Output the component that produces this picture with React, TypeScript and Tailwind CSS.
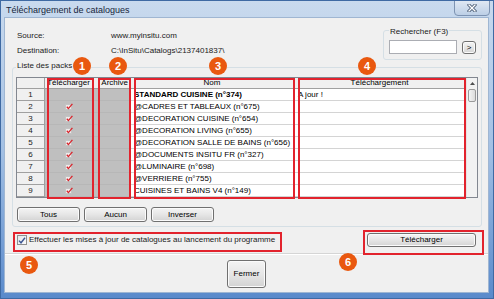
import React from "react";

const rows = [
  { name: "STANDARD CUISINE (n°374)", bold: true, status: "A jour !", check: false },
  { name: "@CADRES ET TABLEAUX (n°675)", check: true },
  { name: "@DECORATION CUISINE (n°654)", check: true },
  { name: "@DECORATION LIVING (n°655)", check: true },
  { name: "@DECORATION SALLE DE BAINS (n°656)", check: true },
  { name: "@DOCUMENTS INSITU FR (n°327)", check: true },
  { name: "@LUMINAIRE (n°698)", check: true },
  { name: "@VERRIERE (n°755)", check: true },
  { name: "CUISINES ET BAINS V4 (n°149)", check: true },
];

function RedCheck() {
  return (
    <svg width="8" height="7" viewBox="0 0 8 7">
      <rect x="0.5" y="1.5" width="6" height="5" fill="#ececec" stroke="#c4c4c4" />
      <path d="M1.8 3.8 L3.4 5.6 L7.4 0.8" stroke="#d8222a" strokeWidth="1.3" fill="none" />
    </svg>
  );
}

function WinButton({ children, className = "" }: { children: React.ReactNode; className?: string }) {
  return (
    <div
      className={`flex items-center justify-center rounded-[3px] border border-[#707070] bg-linear-to-b from-[#f4f4f4] via-[#e6e6e6] to-[#d3d3d3] text-black shadow-[inset_0_0_0_1px_#fbfbfb] ${className}`}
    >
      {children}
    </div>
  );
}

function Badge({ n, className }: { n: number; className: string }) {
  return (
    <div
      className={`absolute w-[18px] h-[18px] rounded-full bg-[#e9580f] text-white font-bold text-[11px] flex items-center justify-center leading-none ${className}`}
    >
      {n}
    </div>
  );
}

export default function App() {
  return (
    <div className="relative w-[494px] h-[299px] overflow-hidden bg-linear-to-b from-[#c9daee] via-[#a3c0e4] to-[#5a8acb] border border-[#3f6aa3] font-['Liberation_Sans',Arial,sans-serif] text-[8px] leading-[10px] text-black">
      {/* title bar */}
      <div className="relative h-[17px] flex items-center pl-[5px]">
        <span className="text-[9px] text-[#17263b]">Téléchargement de catalogues</span>
        <div className="absolute right-[3px] top-[-1px] w-[36px] h-[16px] rounded-b-[4px] border border-[#7d93b2] bg-linear-to-b from-[#dfe8f3] to-[#bccfe6] flex items-center justify-center">
          <svg width="10" height="8" viewBox="0 0 10 8">
            <path d="M2 1 L8 7 M8 1 L2 7" stroke="#3b4e68" strokeWidth="3" strokeLinecap="square" />
            <path d="M2 1 L8 7 M8 1 L2 7" stroke="#ffffff" strokeWidth="1.4" strokeLinecap="square" />
          </svg>
        </div>
      </div>

      {/* client area */}
      <div className="ml-[4px] mr-[5px] h-[274px] bg-[#f0f0f0] flex flex-col shadow-[0_0_0_1px_#9fb6d2]">
        {/* source / destination + search */}
        <div className="h-[45px] flex">
          <div className="flex-1 pl-[12px] pt-[10px] text-[#1a1a1a]">
            <div className="flex h-[15px] items-center">
              <span className="w-[94px]">Source:</span>
              <span>www.myinsitu.com</span>
            </div>
            <div className="flex h-[15px] items-center">
              <span className="w-[94px]">Destination:</span>
              <span>C:\InSitu\Catalogs\2137401837\</span>
            </div>
          </div>
          <div className="relative w-[99px] h-[30px] mt-[12px] mr-[6px] border border-[#d5dfe5] rounded-[3px]">
            <span className="absolute left-[5px] -top-[4px] px-[1px] bg-[#f0f0f0] text-[#1a1a1a]">Rechercher (F3)</span>
            <div className="flex items-start gap-[5px] pl-[5px] pt-[9px]">
              <div className="w-[68px] h-[14px] bg-white border border-[#abadb3]" />
              <WinButton className="w-[14px] h-[13px] mt-[1px] text-[#333]">&gt;</WinButton>
            </div>
          </div>
        </div>

        {/* liste des packs */}
        <div className="relative mt-[4px] ml-[7px] mr-[6px] h-[160px] border border-[#d5dfe5] rounded-[3px]">
          <span className="absolute left-[3px] -top-[7px] px-[1px] bg-[#f0f0f0] text-[#1a1a1a]">Liste des packs</span>

          {/* grid */}
          <div className="mt-[9px] ml-[3px] mr-[3px] h-[121px] border border-[#828790] bg-white flex">
            {/* row header column */}
            <div className="w-[28px] flex flex-col bg-[#f0f0f0]">
              <div className="h-[11px] border-r border-b border-[#a0a0a0]" />
              {rows.map((_, i) => (
                <div key={i} className="h-[12px] flex items-center justify-center border-r border-b border-[#a0a0a0] text-[#222]">
                  {i + 1}
                </div>
              ))}
            </div>
            {/* télécharger */}
            <div className="w-[48px] flex flex-col">
              <div className="h-[11px] flex items-center justify-center bg-[#f0f0f0] border-r border-b border-[#a0a0a0]">Télécharger</div>
              {rows.map((r, i) => (
                <div key={i} className="h-[12px] flex items-center justify-center bg-[#bfbfbf] border-r border-b border-[#b7b7b7]">
                  {r.check && <RedCheck />}
                </div>
              ))}
            </div>
            {/* archive */}
            <div className="w-[38px] flex flex-col">
              <div className="h-[11px] flex items-center justify-end pr-[2px] bg-[#f0f0f0] border-r border-b border-[#a0a0a0]">Archive</div>
              {rows.map((_, i) => (
                <div key={i} className="h-[12px] bg-[#bfbfbf] border-r border-b border-[#b7b7b7]" />
              ))}
            </div>
            {/* nom */}
            <div className="w-[163px] flex flex-col">
              <div className="h-[11px] flex items-center justify-center bg-[#f0f0f0] border-r border-b border-[#a0a0a0]">Nom</div>
              {rows.map((r, i) => (
                <div
                  key={i}
                  className={`h-[12px] flex items-center pl-[3px] whitespace-nowrap overflow-hidden border-r border-b border-[#d4d4d4] ${r.bold ? "font-bold" : ""}`}
                >
                  {r.name}
                </div>
              ))}
            </div>
            {/* téléchargement */}
            <div className="w-[172px] flex flex-col">
              <div className="h-[11px] flex items-center justify-center bg-[#f0f0f0] border-r border-b border-[#a0a0a0]">Téléchargement</div>
              {rows.map((r, i) => (
                <div key={i} className="h-[12px] flex items-center pl-[4px] border-r border-b border-[#d4d4d4]">
                  {r.status ?? ""}
                </div>
              ))}
            </div>
            {/* scrollbar */}
            <div className="w-[11px] flex flex-col bg-[#f2f2f2] border-l border-[#e4e4e4]">
              <div className="h-[11px] flex items-center justify-center">
                <svg width="5" height="3" viewBox="0 0 5 3">
                  <path d="M0 3 L2.5 0 L5 3 Z" fill="#4d4d4d" />
                </svg>
              </div>
              <div className="h-[13px] mx-[1px] rounded-[2px] border border-[#9a9a9a] bg-linear-to-r from-[#f4f4f4] to-[#dcdcdc]" />
            </div>
          </div>

          {/* buttons */}
          <div className="flex gap-[4px] mt-[9px] ml-[4px]">
            <WinButton className="w-[63px] h-[15px]">Tous</WinButton>
            <WinButton className="w-[63px] h-[15px]">Aucun</WinButton>
            <WinButton className="w-[63px] h-[15px]">Inverser</WinButton>
          </div>
        </div>

        {/* auto-update + télécharger */}
        <div className="h-[26px] flex items-center pl-[12px] pr-[12px]">
          <div className="w-[10px] h-[10px] border border-[#8f8f8f] bg-linear-to-br from-[#e3e6ea] to-[#fbfbfb] flex items-center justify-center">
            <svg width="8" height="7" viewBox="0 0 8 7">
              <path d="M1 3.6 L3 5.8 L7 0.8" stroke="#3e5793" strokeWidth="1.4" fill="none" />
            </svg>
          </div>
          <span className="ml-[2px] text-[#1a1a1a]">Effectuer les mises à jour de catalogues au lancement du programme</span>
          <div className="flex-1" />
          <WinButton className="w-[109px] h-[14px]">Télécharger</WinButton>
        </div>
        <div className="h-[2px] border-t border-[#d5d5d5] border-b border-b-white" />

        {/* fermer */}
        <div className="flex justify-center mt-[5px]">
          <WinButton className="w-[39px] h-[28px]">Fermer</WinButton>
        </div>
      </div>

      {/* annotations */}
      <div className="absolute left-[46px] top-[77px] w-[47px] h-[121px] border-2 border-[#e2232d]" />
      <div className="absolute left-[97px] top-[77px] w-[33px] h-[121px] border-2 border-[#e2232d]" />
      <div className="absolute left-[133px] top-[77px] w-[161px] h-[121px] border-2 border-[#e2232d]" />
      <div className="absolute left-[297px] top-[77px] w-[168px] h-[121px] border-2 border-[#e2232d]" />
      <div className="absolute left-[12px] top-[231px] w-[269px] h-[20px] border-2 border-[#e2232d]" />
      <div className="absolute left-[362px] top-[229px] w-[121px] h-[25px] border-2 border-[#e2232d]" />

      <Badge n={1} className="left-[72px] top-[56px]" />
      <Badge n={2} className="left-[108px] top-[56px]" />
      <Badge n={3} className="left-[208px] top-[56px]" />
      <Badge n={4} className="left-[357px] top-[56px]" />
      <Badge n={5} className="left-[19px] top-[255px]" />
      <Badge n={6} className="left-[338px] top-[252px]" />
    </div>
  );
}
